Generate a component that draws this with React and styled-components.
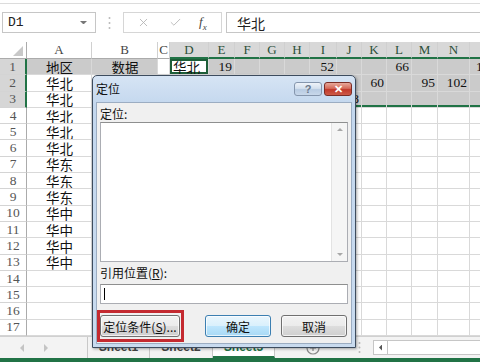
import React from 'react'
import styled, { createGlobalStyle } from 'styled-components'
import { X, Check } from 'lucide-react'

const Global = createGlobalStyle`
  *, *::before, *::after { box-sizing: border-box; }
  html, body { margin: 0; padding: 0; background: #fff; }
  body {
    width: 480px;
    height: 362px;
    overflow: hidden;
    font-family: "Noto Sans CJK SC", sans-serif;
  }
`

const COLS = [27, 65, 66, 12, 39, 26, 25, 25, 25, 27, 25, 25, 25, 26, 32, 64]
const LETTERS = 'ABCDEFGHIJKLMNO'.split('')

const ROWS = [
  { 0: '地区', 1: '数据', 3: '华北', 4: '19', 8: '52', 11: '66', 14: '1' },
  { 0: '华北', 10: '60', 12: '95', 13: '102' },
  { 0: '华北', 9: '58' },
  { 0: '华北' },
  { 0: '华北' },
  { 0: '华北' },
  { 0: '华东' },
  { 0: '华东' },
  { 0: '华东' },
  { 0: '华中' },
  { 0: '华中' },
  { 0: '华中' },
  { 0: '华中' },
  {}, {}, {}, {},
]

const inSel = (r, c) => r <= 2 && c >= 3

const Screen = styled.div`
  position: relative;
  width: 480px;
  height: 362px;
  overflow: hidden;
  display: flex;
  flex-direction: column;
  background: #fff;
`

const TopStrip = styled.div`
  height: 4px;
  border-bottom: 1px solid #dcdcdc;
  flex-shrink: 0;
`

const FormulaBar = styled.div`
  display: flex;
  align-items: center;
  height: 21px;
  margin: 8px 0 9px 2px;
  flex-shrink: 0;
`

const NameBox = styled.div`
  width: 94px;
  height: 21px;
  border: 1px solid #c6c6c6;
  display: flex;
  align-items: center;
  justify-content: space-between;
  padding: 0 8px 0 5px;
  font: 13px "Liberation Mono", monospace;
  color: #222;
`

const Dots = styled.div`
  width: 27px;
  display: flex;
  justify-content: center;
`

const FxBox = styled.div`
  width: 99px;
  height: 21px;
  border: 1px solid #d6d6d6;
  display: flex;
  align-items: center;
  padding-left: 13px;
  gap: 19px;
  color: #b4b4b4;
`

const Fx = styled.span`
  font: italic 13px "Liberation Serif", serif;
  color: #444;
  margin-left: -2px;
  sub { font-size: 9px; }
`

const FormulaInput = styled.div`
  flex: 1;
  height: 21px;
  margin-left: 4px;
  border: 1px solid #c6c6c6;
  border-right: none;
  display: flex;
  align-items: center;
  padding-left: 10px;
  font-size: 14px;
  color: #222;
`

const Grid = styled.div`
  display: grid;
  grid-template-columns: ${COLS.map((w) => w + 'px').join(' ')};
  grid-template-rows: 17px repeat(17, 16.3px);
  flex-shrink: 0;
`

const Corner = styled.div`
  background: #fff;
  border-right: 1px solid #ababab;
  border-bottom: 1px solid #ababab;
  display: flex;
  align-items: flex-end;
  justify-content: flex-end;
  padding: 0 3px 2px 0;
`

const ColHead = styled.div`
  background: ${(p) => (p.$sel ? '#d8d8d8' : '#fff')};
  border-right: 1px solid #d0d0d0;
  border-bottom: ${(p) => (p.$sel ? '2px solid #217346' : '1px solid #ababab')};
  color: ${(p) => (p.$sel ? '#2b4f38' : '#444')};
  font: 13px "Liberation Serif", serif;
  display: flex;
  align-items: center;
  justify-content: center;
  overflow: hidden;
`

const RowHead = styled.div`
  background: ${(p) => (p.$sel ? '#d6d6d6' : '#fff')};
  border-right: ${(p) => (p.$sel ? '2px solid #217346' : '1px solid #ababab')};
  border-bottom: 1px solid #d4d4d4;
  color: #555;
  font: 13.5px "Liberation Serif", serif;
  display: flex;
  align-items: center;
  justify-content: center;
`

const Cell = styled.div`
  background: ${(p) => (p.$fill ? '#cbcbcb' : '#fff')};
  border-right: 1px solid #d9d9d9;
  border-bottom: 1px solid #d9d9d9;
  box-shadow: ${(p) => p.$edge || 'none'};
  display: flex;
  align-items: center;
  justify-content: ${(p) => p.$align};
  padding: 0 2px 0 ${(p) => p.$padL || 3}px;
  font: 13.5px "Liberation Serif", "Noto Sans CJK SC", serif;
  color: #111;
  white-space: nowrap;
  overflow: hidden;
`

const SheetBar = styled.div`
  height: 22px;
  flex-shrink: 0;
  display: flex;
  align-items: stretch;
  background: #f3f3f3;
  border-top: 1px solid #d0d0d0;
`

const Nav = styled.div`
  width: 88px;
  display: flex;
  align-items: center;
  padding-left: 20px;
  gap: 20px;
  border-right: 1px solid #c8c8c8;
`

const Tab = styled.div`
  width: ${(p) => p.$w}px;
  display: flex;
  align-items: center;
  justify-content: center;
  font: bold 12px "Liberation Sans", sans-serif;
  color: ${(p) => (p.$active ? '#217346' : '#444')};
  background: ${(p) => (p.$active ? '#fff' : 'transparent')};
  border-right: 1px solid #c8c8c8;
  border-bottom: ${(p) => (p.$active ? '2px solid #217346' : 'none')};
  padding-bottom: ${(p) => (p.$active ? 0 : 2)}px;
`

const AddArea = styled.div`
  width: 78px;
  display: flex;
  align-items: center;
  padding-left: 31px;
  color: #888;
`

const HScroll = styled.div`
  flex: 1;
  display: flex;
  align-items: center;
  gap: 12px;
  padding: 2px 0 2px 5px;
`

const Track = styled.div`
  flex: 1;
  height: 15px;
  border: 1px solid #c6c6c6;
  border-right: none;
  background: #fff;
  display: flex;
`

const TrackBtn = styled.div`
  width: 14px;
  border-right: 1px solid #c6c6c6;
  display: flex;
  align-items: center;
  justify-content: center;
`

const StatusBar = styled.div`
  flex: 1;
  background: #217346;
`

const Dialog = styled.div`
  position: absolute;
  left: 92px;
  top: 75px;
  width: 264px;
  height: 273px;
  border: 1px solid #3d4c5e;
  border-radius: 5px 5px 0 0;
  background: linear-gradient(#d6e4f4, #c3d7ee 30px, #c9dbef);
  padding: 0 3px 3px 3px;
  display: flex;
  flex-direction: column;
  box-shadow: 1px 1px 3px rgba(0, 0, 0, 0.35);
`

const TitleBar = styled.div`
  height: 26px;
  display: flex;
  align-items: flex-start;
  justify-content: space-between;
  padding-top: 6px;
`

const Title = styled.span`
  font-size: 12px;
  color: #111;
  line-height: 14px;
`

const WinBtns = styled.div`
  display: flex;
  gap: 2px;
`

const WinBtn = styled.div`
  width: 28px;
  height: 14px;
  border-radius: 3px;
  display: flex;
  align-items: center;
  justify-content: center;
  border: 1px solid ${(p) => (p.$close ? '#7a2d26' : '#8596ad')};
  background: ${(p) =>
    p.$close
      ? 'linear-gradient(#e8a99b, #d46a5a 45%, #c2392b 55%, #cc5a48)'
      : 'linear-gradient(#eef3f9, #d4e0ee 45%, #b8cbe2 55%, #c8d8ea)'};
  color: ${(p) => (p.$close ? '#fff' : '#6a7788')};
  font: bold 11px "Liberation Sans", sans-serif;
`

const Body = styled.div`
  flex: 1;
  background: #f0f0f0;
  border: 1px solid #9cadc2;
  padding: 3px 3px 0 3px;
  display: flex;
  flex-direction: column;
`

const Label = styled.div`
  font-size: 12px;
  line-height: 16px;
  height: ${(p) => p.$h || 16}px;
  color: #111;
  margin-top: ${(p) => p.$mt || 0}px;
  u { text-decoration: underline; }
`

const ListBox = styled.div`
  height: 140px;
  background: #fff;
  border: 1px solid #abadb3;
  border-top-color: #8e8f8f;
  display: flex;
  justify-content: flex-end;
`

const VScroll = styled.div`
  width: 16px;
  background: #f5f5f5;
  border-left: 1px solid #e3e3e3;
  display: flex;
  flex-direction: column;
  justify-content: space-between;
  align-items: center;
  padding: 5px 0 5px;
`

const TextInput = styled.div`
  height: 20px;
  background: #fff;
  border: 1px solid #abadb3;
  border-top-color: #8e8f8f;
  display: flex;
  align-items: center;
  padding-left: 3px;
`

const Caret = styled.span`
  width: 1px;
  height: 12px;
  background: #000;
`

const Buttons = styled.div`
  display: flex;
  justify-content: space-between;
  margin-top: 11px;
  padding-right: 1px;
`

const Group = styled.div`
  display: flex;
  gap: 10px;
`

const Button = styled.div`
  position: relative;
  width: ${(p) => p.$w}px;
  height: 22px;
  border-radius: 3px;
  border: 1px solid ${(p) => (p.$default ? '#3c7fb1' : '#707070')};
  background: ${(p) =>
    p.$default
      ? 'linear-gradient(#eaf6fd, #d9f0fc 50%, #bee6fd 50%, #a7d9f5)'
      : 'linear-gradient(#f2f2f2, #ebebeb 50%, #dddddd 50%, #cfcfcf)'};
  box-shadow: inset 0 0 0 1px rgba(255, 255, 255, 0.7);
  display: flex;
  align-items: center;
  justify-content: center;
  font-size: 12px;
  color: #111;
  u { text-decoration: underline; }
`

const Highlight = styled.span`
  position: absolute;
  left: -4px;
  right: -5px;
  top: -6px;
  bottom: -6px;
  border: 3px solid #c42a30;
  pointer-events: none;
`

const Tri = ({ dir = 'down', color = '#666', size = 5 }) => {
  const pts = {
    down: `0,0 ${size * 2},0 ${size},${size}`,
    up: `0,${size} ${size * 2},${size} ${size},0`,
    left: `${size},0 ${size},${size * 2} 0,${size}`,
    right: `0,0 0,${size * 2} ${size},${size}`,
  }[dir]
  const w = dir === 'left' || dir === 'right' ? size : size * 2
  const h = dir === 'left' || dir === 'right' ? size * 2 : size
  return (
    <svg width={w} height={h} viewBox={`0 0 ${w} ${h}`}>
      <polygon points={pts} fill={color} />
    </svg>
  )
}

const VDots = ({ h = 12 }) => (
  <svg width="3" height={h} viewBox={`0 0 3 ${h}`}>
    {[1, h / 2, h - 1].map((y) => (
      <circle key={y} cx="1.5" cy={y} r="1" fill="#b8b8b8" />
    ))}
  </svg>
)

export default function App() {
  return (
    <>
      <Global />
      <Screen>
        <TopStrip />
        <FormulaBar>
          <NameBox>
            D1
            <Tri dir="down" color="#777" size={3.5} />
          </NameBox>
          <Dots>
            <VDots />
          </Dots>
          <FxBox>
            <X size={13} strokeWidth={1.6} />
            <Check size={13} strokeWidth={1.6} />
            <Fx>
              f<sub>x</sub>
            </Fx>
          </FxBox>
          <FormulaInput>华北</FormulaInput>
        </FormulaBar>

        <Grid>
          <Corner>
            <svg width="10" height="10" viewBox="0 0 10 10">
              <polygon points="10,0 10,10 0,10" fill="#c8c8c8" />
            </svg>
          </Corner>
          {LETTERS.map((l, i) => (
            <ColHead key={l} $sel={i >= 3}>
              {i < 14 ? l : ''}
            </ColHead>
          ))}
          {ROWS.map((row, r) => (
            <React.Fragment key={r}>
              <RowHead $sel={r <= 2}>{r + 1}</RowHead>
              {LETTERS.map((l, c) => {
                const v = row[c] || ''
                const sel = inSel(r, c)
                const active = r === 0 && c === 3
                const fill = (r === 0 && c <= 1) || (sel && !active)
                const edges = []
                if (active) edges.push('inset 0 0 0 2px #1d5e38')
                else {
                  if (sel && c === 3) edges.push('inset 2px 0 0 #217346')
                  if (sel && r === 2) edges.push('inset 0 -2px 0 #217346')
                }
                const cjk = /[\u4e00-\u9fff]/.test(v)
                const last = c === 14
                const align = cjk ? (c <= 1 ? 'center' : 'flex-start') : last ? 'flex-start' : 'flex-end'
                return (
                  <Cell
                    key={l}
                    $fill={fill}
                    $align={align}
                    $padL={last ? 6 : 3}
                    $edge={edges.join(', ')}
                  >
                    {v}
                  </Cell>
                )
              })}
            </React.Fragment>
          ))}
        </Grid>

        <SheetBar>
          <Nav>
            <Tri dir="left" color="#c4c4c4" size={4} />
            <Tri dir="right" color="#c4c4c4" size={4} />
          </Nav>
          <Tab $w={62}>Sheet1</Tab>
          <Tab $w={63}>Sheet2</Tab>
          <Tab $w={62} $active>
            Sheet3
          </Tab>
          <AddArea>
            <svg width="14" height="14" viewBox="0 0 14 14">
              <circle cx="7" cy="7" r="6" fill="none" stroke="#8a8a8a" strokeWidth="1.2" />
              <path d="M7 4v6M4 7h6" stroke="#8a8a8a" strokeWidth="1.2" />
            </svg>
          </AddArea>
          <HScroll>
            <VDots h={11} />
            <Track>
              <TrackBtn>
                <Tri dir="left" color="#555" size={3.5} />
              </TrackBtn>
            </Track>
          </HScroll>
        </SheetBar>
        <StatusBar />

        <Dialog>
          <TitleBar>
            <Title>定位</Title>
            <WinBtns>
              <WinBtn>?</WinBtn>
              <WinBtn $close>✕</WinBtn>
            </WinBtns>
          </TitleBar>
          <Body>
            <Label>定位:</Label>
            <ListBox>
              <VScroll>
                <Tri dir="up" color="#a8a8a8" size={3} />
                <Tri dir="down" color="#a8a8a8" size={3} />
              </VScroll>
            </ListBox>
            <Label $mt={3} $h={19}>
              引用位置(<u>R</u>):
            </Label>
            <TextInput>
              <Caret />
            </TextInput>
            <Buttons>
              <Button $w={80}>
                定位条件(<u>S</u>)...
                <Highlight />
              </Button>
              <Group>
                <Button $w={66} $default>
                  确定
                </Button>
                <Button $w={66}>取消</Button>
              </Group>
            </Buttons>
          </Body>
        </Dialog>
      </Screen>
    </>
  )
}
